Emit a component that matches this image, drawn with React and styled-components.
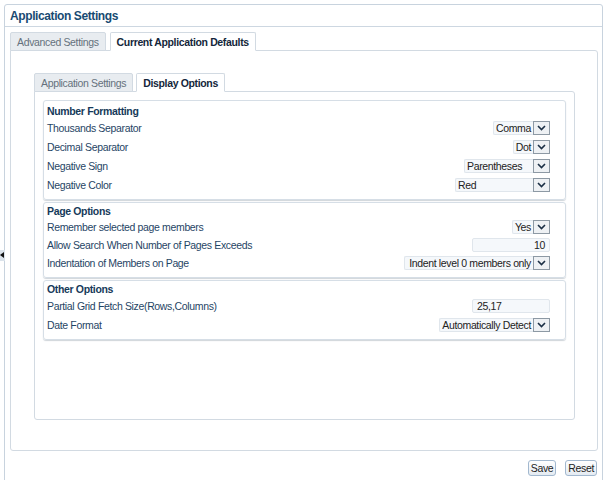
import React from "react";
import styled, { createGlobalStyle } from "styled-components";

const GlobalStyle = createGlobalStyle`
  * { box-sizing: border-box; }
  body {
    margin: 0;
    background: #ffffff;
    font-family: "Liberation Sans", Arial, sans-serif;
    font-size: 10.5px;
    letter-spacing: -0.35px;
    color: #1f4565;
  }
`;

//페이지
const Page = styled.div`
  position: relative;
  width: 604px;
  height: 480px;
  overflow: hidden;
`;
//접기 핸들
const Handle = styled.div`
  position: absolute;
  left: 0;
  top: 250px;
  width: 5px;
  height: 11px;
  background: #dbe3eb;
  &::after {
    content: "";
    position: absolute;
    left: 0;
    top: 2px;
    border-top: 3px solid transparent;
    border-bottom: 3px solid transparent;
    border-right: 4px solid #111;
  }
`;
//바깥 패널
const Panel = styled.div`
  margin: 4px 1px 0 4px;
  height: 490px;
  border: 1px solid #c8d3de;
  border-radius: 3px;
  display: flex;
  flex-direction: column;
`;
//헤더
const Header = styled.div`
  height: 22px;
  border-bottom: 1px solid #cdd7e1;
  padding-left: 5px;
  display: flex;
  align-items: center;
`;
const Title = styled.h1`
  margin: 0;
  font-size: 12px;
  letter-spacing: -0.4px;
  font-weight: bold;
  color: #184a72;
`;
//본문
const Body = styled.div`
  padding: 5px 4px 0 5px;
  display: flex;
  flex-direction: column;
`;
//탭
const TabBar = styled.div`
  display: flex;
  gap: ${props => props.gap}px;
`;
const Tab = styled.div`
  position: relative;
  z-index: ${props => (props.active ? 1 : 0)};
  height: 19px;
  margin-bottom: -1px;
  padding: 0 6px;
  display: flex;
  align-items: center;
  border: 1px solid #d2dae2;
  border-bottom: 1px solid ${props => (props.active ? "#ffffff" : "#d2dae2")};
  border-radius: 2px 2px 0 0;
  background: ${props => (props.active ? "#ffffff" : "#e8ecf0")};
  color: ${props => (props.active ? "#13263a" : "#65717c")};
  font-weight: ${props => (props.active ? "bold" : "normal")};
  white-space: nowrap;
`;
const TabPanel = styled.div`
  height: ${props => props.h}px;
  border: 1px solid #d2dae2;
  border-radius: 0 3px 3px 3px;
  padding: ${props => props.pad};
  display: flex;
  flex-direction: column;
`;
//섹션
const Sections = styled.div`
  display: flex;
  flex-direction: column;
  gap: 2px;
`;
const Section = styled.div`
  border: 1px solid #d6dee6;
  border-radius: 3px;
  padding: ${props => props.top}px 0 5px 0;
  box-shadow: 0 1px 1px rgba(120, 135, 150, 0.35);
`;
const SectionTitle = styled.div`
  height: 14px;
  line-height: 14px;
  padding-left: 3px;
  font-weight: bold;
  color: #163a5a;
`;
const Row = styled.div`
  height: ${props => props.h}px;
  display: flex;
  align-items: center;
  justify-content: space-between;
  padding: 0 15px 0 3px;
`;
const Label = styled.span`
  color: #1f4565;
`;
//셀렉트
const Select = styled.div`
  display: inline-flex;
  height: 14px;
`;
const SelectText = styled.div`
  min-width: ${props => props.w}px;
  height: 14px;
  line-height: 12px;
  padding: 0 2px;
  text-align: ${props => props.align};
  background: #f5f8fb;
  border: 1px solid #e0e6ec;
  border-right: none;
  border-radius: 2px 0 0 2px;
  color: #222;
  white-space: nowrap;
`;
const SelectButton = styled.div`
  width: 17px;
  height: 14px;
  border: 1px solid #8d99a4;
  background: #eef1f4;
  display: flex;
  align-items: center;
  justify-content: center;
`;
const Input = styled.div`
  width: 78px;
  height: 14px;
  line-height: 12px;
  padding: 0 4px;
  text-align: ${props => props.align};
  background: #f5f8fb;
  border: 1px solid #e0e6ec;
  border-radius: 2px;
  color: #222;
`;
//버튼
const ButtonRow = styled.div`
  display: flex;
  justify-content: flex-end;
  gap: 9px;
  margin-top: 9px;
  padding-right: 1px;
`;
const Button = styled.button`
  height: 16px;
  min-width: ${props => props.w}px;
  padding: 0 2px;
  font-family: inherit;
  font-size: 10.5px;
  letter-spacing: -0.35px;
  color: #222;
  border: 1px solid #a2b8cf;
  border-radius: 3px;
  background: linear-gradient(#ffffff, #e4ebf2);
`;

const Chevron = () => (
  <svg width="9" height="6" viewBox="0 0 9 6">
    <path d="M1 1 L4.5 4.5 L8 1" fill="none" stroke="#1b2f45" strokeWidth="1.6" />
  </svg>
);

const Dropdown = ({ value, w, align = "right" }) => (
  <Select>
    <SelectText w={w} align={align}>{value}</SelectText>
    <SelectButton>
      <Chevron />
    </SelectButton>
  </Select>
);

const sections = [
  {
    title: "Number Formatting",
    top: 3,
    h: 19,
    rows: [
      { label: "Thousands Separator", control: <Dropdown value="Comma" w={38} /> },
      { label: "Decimal Separator", control: <Dropdown value="Dot" w={20} /> },
      { label: "Negative Sign", control: <Dropdown value="Parentheses" w={69} align="left" /> },
      { label: "Negative Color", control: <Dropdown value="Red" w={78} align="left" /> }
    ]
  },
  {
    title: "Page Options",
    top: 1,
    h: 18,
    rows: [
      { label: "Remember selected page members", control: <Dropdown value="Yes" w={20} /> },
      { label: "Allow Search When Number of Pages Exceeds", control: <Input align="right">10</Input> },
      { label: "Indentation of Members on Page", control: <Dropdown value="Indent level 0 members only" w={129} /> }
    ]
  },
  {
    title: "Other Options",
    top: 1,
    h: 19,
    rows: [
      { label: "Partial Grid Fetch Size(Rows,Columns)", control: <Input align="left">25,17</Input> },
      { label: "Date Format", control: <Dropdown value="Automatically Detect" w={92} /> }
    ]
  }
];

const App = () => (
  <>
    <GlobalStyle />
    <Page>
      <Handle />
      <Panel>
        <Header>
          <Title>Application Settings</Title>
        </Header>
        <Body>
          <TabBar gap={4}>
            <Tab>Advanced Settings</Tab>
            <Tab active>Current Application Defaults</Tab>
          </TabBar>
          <TabPanel h={401} pad="22px 22px 0 23px">
            <TabBar gap={3}>
              <Tab>Application Settings</Tab>
              <Tab active>Display Options</Tab>
            </TabBar>
            <TabPanel h={329} pad="8px 8px 0 8px">
              <Sections>
                {sections.map(section => (
                  <Section key={section.title} top={section.top}>
                    <SectionTitle>{section.title}</SectionTitle>
                    {section.rows.map(row => (
                      <Row key={row.label} h={section.h}>
                        <Label>{row.label}</Label>
                        {row.control}
                      </Row>
                    ))}
                  </Section>
                ))}
              </Sections>
            </TabPanel>
          </TabPanel>
          <ButtonRow>
            <Button w={28}>Save</Button>
            <Button w={30}>Reset</Button>
          </ButtonRow>
        </Body>
      </Panel>
    </Page>
  </>
);

export default App;
